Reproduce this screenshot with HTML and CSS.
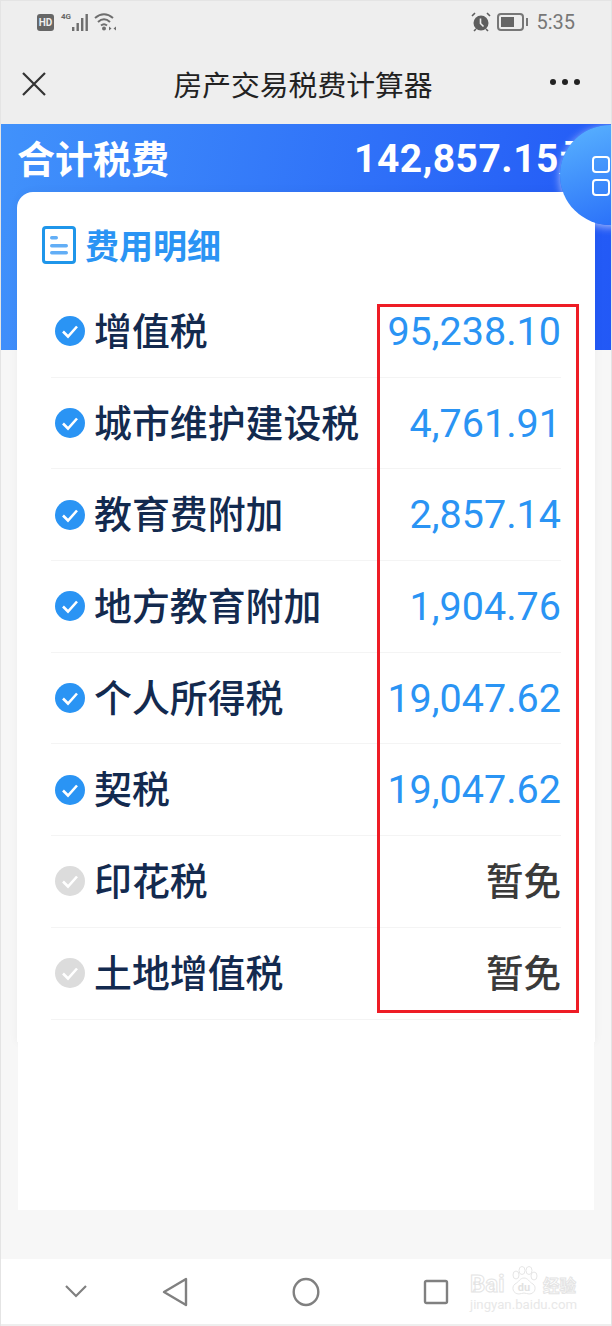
FILE: index.html
```html
<!DOCTYPE html>
<html lang="zh">
<head>
<meta charset="utf-8"/>
<meta content="width=device-width, initial-scale=1.0" name="viewport"/>
<title>房产交易税费计算器</title>
<link rel="stylesheet" href="styles.css">
</head>
<body>
<div class="phone">
  <!-- barra de estado -->
  <div class="status-bar">
    <div class="status-left">
      <span class="hd">HD</span>
      <span class="net">4G</span>
      <svg class="signal" width="16" height="17" viewBox="0 0 16 17"><g fill="#6e6e6e"><rect x="0" y="13" width="2.400" height="4"/><rect x="4.500" y="9" width="2.400" height="8"/><rect x="9" y="4" width="2.400" height="13"/><rect x="13.500" y="0" width="2.400" height="17"/></g></svg>
      <svg class="wifi" width="22" height="18" viewBox="0 0 22 18"><g fill="none" stroke="#6e6e6e" stroke-width="2"><path d="M1 5 Q10 -2.500 19 5"/><path d="M4 9 Q10 3.500 16 9"/><path d="M7 12.500 Q10 10 13 12.500"/></g><circle cx="10" cy="15.500" r="2" fill="#6e6e6e"/><path d="M15 13.500l2.500 2-2.500 2zM22 13.500l-2.500 2 2.500 2z" fill="#6e6e6e"/></svg>
    </div>
    <div class="status-right">
      <svg width="20" height="20" viewBox="0 0 20 20"><circle cx="10" cy="11" r="7.500" fill="#5e5e5e"/><path d="M9.500 6.500v5l3 3" fill="none" stroke="#eee" stroke-width="1.600"/><path d="M1 4l3-3M19 4l-3-3M3 19l2-2M17 19l-2-2" stroke="#5e5e5e" stroke-width="1.600"/></svg>
      <span class="battery"><span class="battery-level"></span></span>
      <span class="battery-tip"></span>
      <span class="clock">5:35</span>
    </div>
  </div>

  <div class="nav-bar">
    <svg class="nav-close" width="26" height="26" viewBox="0 0 26 26"><path d="M2 2l22 22M24 2L2 24" stroke="#333" stroke-width="2.200" fill="none"/></svg>
    <div class="nav-title">房产交易税费计算器</div>
    <div class="nav-more"><i></i><i></i><i></i></div>
  </div>

  <div class="content">
    <div class="hero">
      <div class="hero-row">
        <span class="hero-label">合计税费</span>
        <span class="hero-total">142,857.15元</span>
      </div>
    </div>

    <div class="sheet">
      <div class="card">
        <div class="card-title">
          <svg width="34" height="38" viewBox="0 0 34 38"><rect x="1.500" y="1.500" width="31" height="35" rx="2.500" fill="#fff" stroke="#1f96ea" stroke-width="3"/><rect x="8" y="10" width="8" height="3.500" rx="1.700" fill="#62aef6"/><rect x="8" y="18" width="18" height="3.500" rx="1.700" fill="#62aef6"/><rect x="8" y="25" width="18" height="3.500" rx="1.700" fill="#62aef6"/></svg>
          <span>费用明细</span>
        </div>
        <ul class="fee-list">
          <li class="fee"><svg class="tick" viewBox="0 0 30 30"><circle cx="15" cy="15" r="15"/><path d="M8 15.500l5 5 9-10"/></svg><span class="fee-name">增值税</span><span class="fee-value">95,238.10</span></li>
          <li class="fee"><svg class="tick" viewBox="0 0 30 30"><circle cx="15" cy="15" r="15"/><path d="M8 15.500l5 5 9-10"/></svg><span class="fee-name">城市维护建设税</span><span class="fee-value">4,761.91</span></li>
          <li class="fee"><svg class="tick" viewBox="0 0 30 30"><circle cx="15" cy="15" r="15"/><path d="M8 15.500l5 5 9-10"/></svg><span class="fee-name">教育费附加</span><span class="fee-value">2,857.14</span></li>
          <li class="fee"><svg class="tick" viewBox="0 0 30 30"><circle cx="15" cy="15" r="15"/><path d="M8 15.500l5 5 9-10"/></svg><span class="fee-name">地方教育附加</span><span class="fee-value">1,904.76</span></li>
          <li class="fee"><svg class="tick" viewBox="0 0 30 30"><circle cx="15" cy="15" r="15"/><path d="M8 15.500l5 5 9-10"/></svg><span class="fee-name">个人所得税</span><span class="fee-value">19,047.62</span></li>
          <li class="fee"><svg class="tick" viewBox="0 0 30 30"><circle cx="15" cy="15" r="15"/><path d="M8 15.500l5 5 9-10"/></svg><span class="fee-name">契税</span><span class="fee-value">19,047.62</span></li>
          <li class="fee off"><svg class="tick" viewBox="0 0 30 30"><circle cx="15" cy="15" r="15"/><path d="M8 15.500l5 5 9-10"/></svg><span class="fee-name">印花税</span><span class="fee-value">暂免</span></li>
          <li class="fee off"><svg class="tick" viewBox="0 0 30 30"><circle cx="15" cy="15" r="15"/><path d="M8 15.500l5 5 9-10"/></svg><span class="fee-name">土地增值税</span><span class="fee-value">暂免</span></li>
        </ul>
      </div>
      <div class="card-rest"></div>
    </div>
  </div>

  <div class="bottom-bar">
    <svg class="nav-chevron" width="24" height="16" viewBox="0 0 24 16"><path d="M2 2l10 10L22 2" fill="none" stroke="#808080" stroke-width="2.200"/></svg>
    <svg width="26" height="30" viewBox="0 0 26 30"><path d="M24 2v26L2 15z" fill="none" stroke="#808080" stroke-width="2.400" stroke-linejoin="round"/></svg>
    <svg width="28" height="30" viewBox="0 0 28 30"><ellipse cx="14" cy="15" rx="12.300" ry="13" fill="none" stroke="#808080" stroke-width="2.400"/></svg>
    <svg class="nav-square" width="26" height="26" viewBox="0 0 26 26"><rect x="2" y="2" width="22" height="22" rx="1.500" fill="none" stroke="#808080" stroke-width="2.400"/></svg>
  </div>

  <!-- encima del contenido -->
  <div class="float-btn"><i></i><i></i></div>
  <div class="red-box"></div>
  <div class="watermark">
    <div class="wm-logo">
      <span class="wm-bai">Bai</span>
      <svg class="wm-paw" width="28" height="30" viewBox="0 0 28 30">
        <g fill="#fff" stroke="#e6e6e6" stroke-width="1">
          <ellipse cx="6" cy="9" rx="3" ry="4"/>
          <ellipse cx="12" cy="4.500" rx="3" ry="4"/>
          <ellipse cx="19" cy="4.500" rx="3" ry="4"/>
          <ellipse cx="24" cy="10" rx="3" ry="4"/>
          <path d="M14 12c4 0 5 4 9 6 4 3 2 10-4 10-2 0-3-1-5-1s-3 1-5 1c-6 0-8-7-4-10 4-2 5-6 9-6z"/>
        </g>
        <text x="14" y="25" text-anchor="middle" class="wm-du">du</text>
      </svg>
      <span class="wm-cn">经验</span>
    </div>
    <div class="wm-url">jingyan.baidu.com</div>
  </div>
  <div class="frame"></div>
</div>
</body>
</html>
```

FILE: styles.css
```css
* {
  box-sizing: border-box;
}
body {
  margin: 0;
  font-family: "Noto Sans CJK SC", "Roboto", sans-serif;
  background: #f7f7f7;
}
.phone {
  position: relative;
  width: 612px;
  height: 1326px;
  overflow: hidden;
  display: flex;
  flex-direction: column;
}
.status-bar {
  height: 44px;
  background: #eeeeee;
  padding: 0 37px;
  display: flex;
  justify-content: space-between;
  align-items: center;
}
.status-left,
.status-right {
  display: flex;
  align-items: center;
}
.hd {
  width: 17px;
  height: 17px;
  border-radius: 3px;
  background: #666;
  color: #eee;
  font: bold 10px/17px "Roboto", sans-serif;
  text-align: center;
}
.net {
  font: bold 8px/10px "Roboto", sans-serif;
  color: #666;
  align-self: flex-start;
  margin: -1px 0 0 7px;
}
.signal {
  margin-left: 1px;
}
.wifi {
  margin-left: 6px;
}
.status-right {
  color: #6e6e6e;
}
.battery {
  width: 27px;
  height: 18px;
  margin-left: 6px;
  border: 2px solid #777;
  border-radius: 4px;
  padding: 2px;
}
.battery-level {
  display: block;
  width: 13px;
  height: 10px;
  background: #666;
}
.battery-tip {
  width: 2px;
  height: 8px;
  background: #777;
  margin-left: 2px;
}
.clock {
  font: 20px "Roboto", sans-serif;
  margin-left: 8px;
  color: #777;
}
.nav-bar {
  height: 80px;
  background: #eeeeee;
  padding: 0 32px 0 21px;
  display: flex;
  align-items: center;
  justify-content: space-between;
}
.nav-title {
  font-size: 28.800px;
  line-height: 40px;
  color: #222;
  margin-left: 9px;
}
.nav-more {
  display: flex;
  gap: 6px;
  margin-bottom: 4px;
}
.nav-more i {
  width: 6px;
  height: 6px;
  border-radius: 50%;
  background: #222;
}
.content {
  flex: 1;
  position: relative;
  background: #f7f7f7;
  min-height: 0;
}
.hero {
  height: 226px;
  background: linear-gradient(100deg, #4192fb, #2258f6);
  padding: 9px 0 0 17px;
}
.hero-row {
  display: flex;
  gap: 185px;
  white-space: nowrap;
}
.hero-label {
  font-size: 38px;
  font-weight: 700;
  line-height: 52px;
  color: #fff;
  margin-top: -2px;
}
.hero-total {
  font: bold 39px/52px "Roboto", sans-serif;
  letter-spacing: 0.500px;
  color: #fff;
}
.sheet {
  margin: -158px 17px 0;
  display: flex;
  flex-direction: column;
}
.card {
  background: #fff;
  border-radius: 16px 16px 0 0;
  padding: 26px 34px 22px;
  box-shadow: 0 0 10px rgba(0, 0, 0, 0.05);
}
.card-rest {
  height: 168px;
  margin: 0 1px;
  background: #fff;
  position: relative;
}
.card-title {
  display: flex;
  align-items: center;
  gap: 9px;
  height: 52px;
  margin-left: -9px;
  font-size: 34px;
  font-weight: 700;
  color: #2a94f4;
}
.card-title svg {
  margin-top: 1px;
}
.fee-list {
  list-style: none;
  margin: 16px 0 0;
  padding: 0;
}
.fee {
  height: 91.700px;
  display: flex;
  align-items: center;
  padding: 0 0 0 4px;
  border-bottom: 1px solid #f4f4f4;
}
.tick {
  width: 30px;
  height: 30px;
  margin-right: 9px;
  flex-shrink: 0;
}
.tick circle {
  fill: #2a94f4;
}
.tick path {
  fill: none;
  stroke: #fff;
  stroke-width: 2.600;
}
.off .tick circle {
  fill: #dcdcdc;
}
.fee-name {
  flex: 1;
  font-size: 37.900px;
  line-height: 52px;
  font-weight: 500;
  color: #132a4f;
  white-space: nowrap;
  margin-bottom: 5px;
}
.fee-value {
  font: 39.500px/52px "Roboto", sans-serif;
  color: #2a94f4;
  margin-bottom: -1px;
}
.off .fee-value {
  font-family: "Noto Sans CJK SC", sans-serif;
  font-size: 37.500px;
  font-weight: 500;
  color: #3a3a3a;
  margin-bottom: 5px;
}
.bottom-bar {
  height: 67px;
  background: #fff;
  border-bottom: 2px solid #eee;
  display: flex;
  align-items: center;
  padding: 0 0 0 64px;
  gap: 104px;
}
.nav-chevron {
  margin-right: -30px;
}
.nav-square {
  margin-left: -1px;
}
.float-btn {
  position: absolute;
  left: 560px;
  top: 125px;
  width: 100px;
  height: 100px;
  border-radius: 50%;
  background: linear-gradient(160deg, #5ab4ff, #2468f8);
  box-shadow: 0 2px 8px rgba(255, 255, 255, 0.6);
  padding: 31px 0 0 32px;
  display: flex;
  flex-direction: column;
  gap: 6px;
}
.float-btn i {
  display: block;
  width: 18px;
  height: 17px;
  border: 2.500px solid #fff;
  border-radius: 4px;
}
.red-box {
  position: absolute;
  left: 377px;
  top: 304px;
  width: 202px;
  height: 709px;
  border: 3px solid #ee1c25;
}
.watermark {
  position: absolute;
  left: 470px;
  top: 1265px;
  width: 110px;
  white-space: nowrap;
}
.wm-logo {
  display: flex;
  align-items: flex-end;
  height: 31px;
}
.wm-bai {
  font: bold 24px/24px "Roboto", sans-serif;
  color: #fff;
  -webkit-text-stroke: 1px #e4e4e4;
  width: 40px;
}
.wm-paw {
  flex-shrink: 0;
}
.wm-du {
  font: bold 11px "Roboto", sans-serif;
  fill: #e2e2e2;
}
.wm-cn {
  font-size: 16.500px;
  line-height: 22px;
  font-weight: 700;
  color: #fff;
  -webkit-text-stroke: 1px #e4e4e4;
  margin-left: 5px;
}
.wm-url {
  font: 13.200px/15px "Roboto", sans-serif;
  color: #e8e8e8;
  margin-top: 1px;
}
.frame {
  position: absolute;
  inset: 0;
  border: 1px solid #e4e4e4;
  border-bottom: 0;
  pointer-events: none;
}
```
